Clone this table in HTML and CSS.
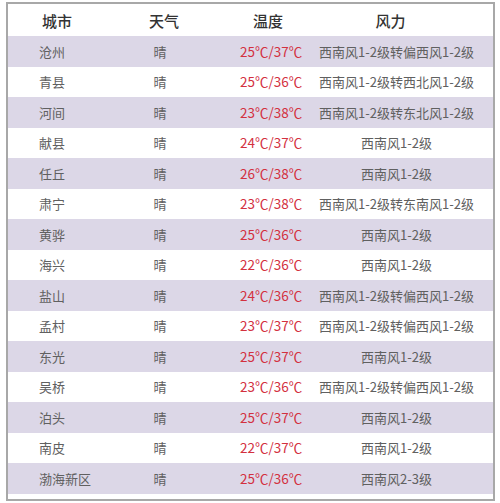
FILE: index.html
```html
<!DOCTYPE html>
<html lang="zh">
<head>
<meta charset="utf-8">
<link rel="stylesheet" href="styles.css">
</head>
<body>
<div class="table">
  <div class="row head">
    <div class="c1">城市</div><div class="c2">天气</div><div class="c3">温度</div><div class="c4">风力</div>
  </div>
  <div class="row alt"><div class="c1">沧州</div><div class="c2">晴</div><div class="c3 t">25℃/37℃</div><div class="c4">西南风1-2级转偏西风1-2级</div></div>
  <div class="row"><div class="c1">青县</div><div class="c2">晴</div><div class="c3 t">25℃/36℃</div><div class="c4">西南风1-2级转西北风1-2级</div></div>
  <div class="row alt"><div class="c1">河间</div><div class="c2">晴</div><div class="c3 t">23℃/38℃</div><div class="c4">西南风1-2级转东北风1-2级</div></div>
  <div class="row"><div class="c1">献县</div><div class="c2">晴</div><div class="c3 t">24℃/37℃</div><div class="c4">西南风1-2级</div></div>
  <div class="row alt"><div class="c1">任丘</div><div class="c2">晴</div><div class="c3 t">26℃/38℃</div><div class="c4">西南风1-2级</div></div>
  <div class="row"><div class="c1">肃宁</div><div class="c2">晴</div><div class="c3 t">23℃/38℃</div><div class="c4">西南风1-2级转东南风1-2级</div></div>
  <div class="row alt"><div class="c1">黄骅</div><div class="c2">晴</div><div class="c3 t">25℃/36℃</div><div class="c4">西南风1-2级</div></div>
  <div class="row"><div class="c1">海兴</div><div class="c2">晴</div><div class="c3 t">22℃/36℃</div><div class="c4">西南风1-2级</div></div>
  <div class="row alt"><div class="c1">盐山</div><div class="c2">晴</div><div class="c3 t">24℃/36℃</div><div class="c4">西南风1-2级转偏西风1-2级</div></div>
  <div class="row"><div class="c1">孟村</div><div class="c2">晴</div><div class="c3 t">23℃/37℃</div><div class="c4">西南风1-2级转偏西风1-2级</div></div>
  <div class="row alt"><div class="c1">东光</div><div class="c2">晴</div><div class="c3 t">25℃/37℃</div><div class="c4">西南风1-2级</div></div>
  <div class="row"><div class="c1">吴桥</div><div class="c2">晴</div><div class="c3 t">23℃/36℃</div><div class="c4">西南风1-2级转偏西风1-2级</div></div>
  <div class="row alt"><div class="c1">泊头</div><div class="c2">晴</div><div class="c3 t">25℃/37℃</div><div class="c4">西南风1-2级</div></div>
  <div class="row"><div class="c1">南皮</div><div class="c2">晴</div><div class="c3 t">22℃/37℃</div><div class="c4">西南风1-2级</div></div>
  <div class="row alt"><div class="c1">渤海新区</div><div class="c2">晴</div><div class="c3 t">25℃/36℃</div><div class="c4">西南风2-3级</div></div>
</div>
</body>
</html>
```

FILE: styles.css
```css
html, body {
  margin: 0;
  padding: 0;
  background: #ffffff;
}
body {
  font-family: "Noto Sans CJK SC", "Noto Sans", sans-serif;
  color: #606060;
  font-size: 13px;
}
.table {
  margin: 2px 0 0 6px;
  width: 489px;
  box-sizing: border-box;
  border: 2px solid #a8a8a8;
  padding-bottom: 5px;
  background: #fff;
}
.row {
  display: grid;
  grid-template-columns: 112px 80px 100px 193px;
  height: 30.5px;
  align-items: center;
  white-space: nowrap;
}
.row > div {
  min-width: 0;
  line-height: 1;
}
.alt {
  background: #dcd7e7;
}
.c1 {
  padding-left: 31px;
}
.c2 {
  text-align: center;
}
.c3 {
  padding-left: 40px;
}
.c4 {
  text-align: center;
}
.t {
  color: #d3303f;
  font-size: 13.5px;
}
.head {
  height: 32px;
  color: #333333;
  font-size: 15px;
  font-weight: 500;
}
.head .c1 {
  padding-left: 34px;
}
.head .c2 {
  padding-left: 8px;
}
.head .c3 {
  padding-left: 53px;
}
.head .c4 {
  padding-right: 12px;
}
```
